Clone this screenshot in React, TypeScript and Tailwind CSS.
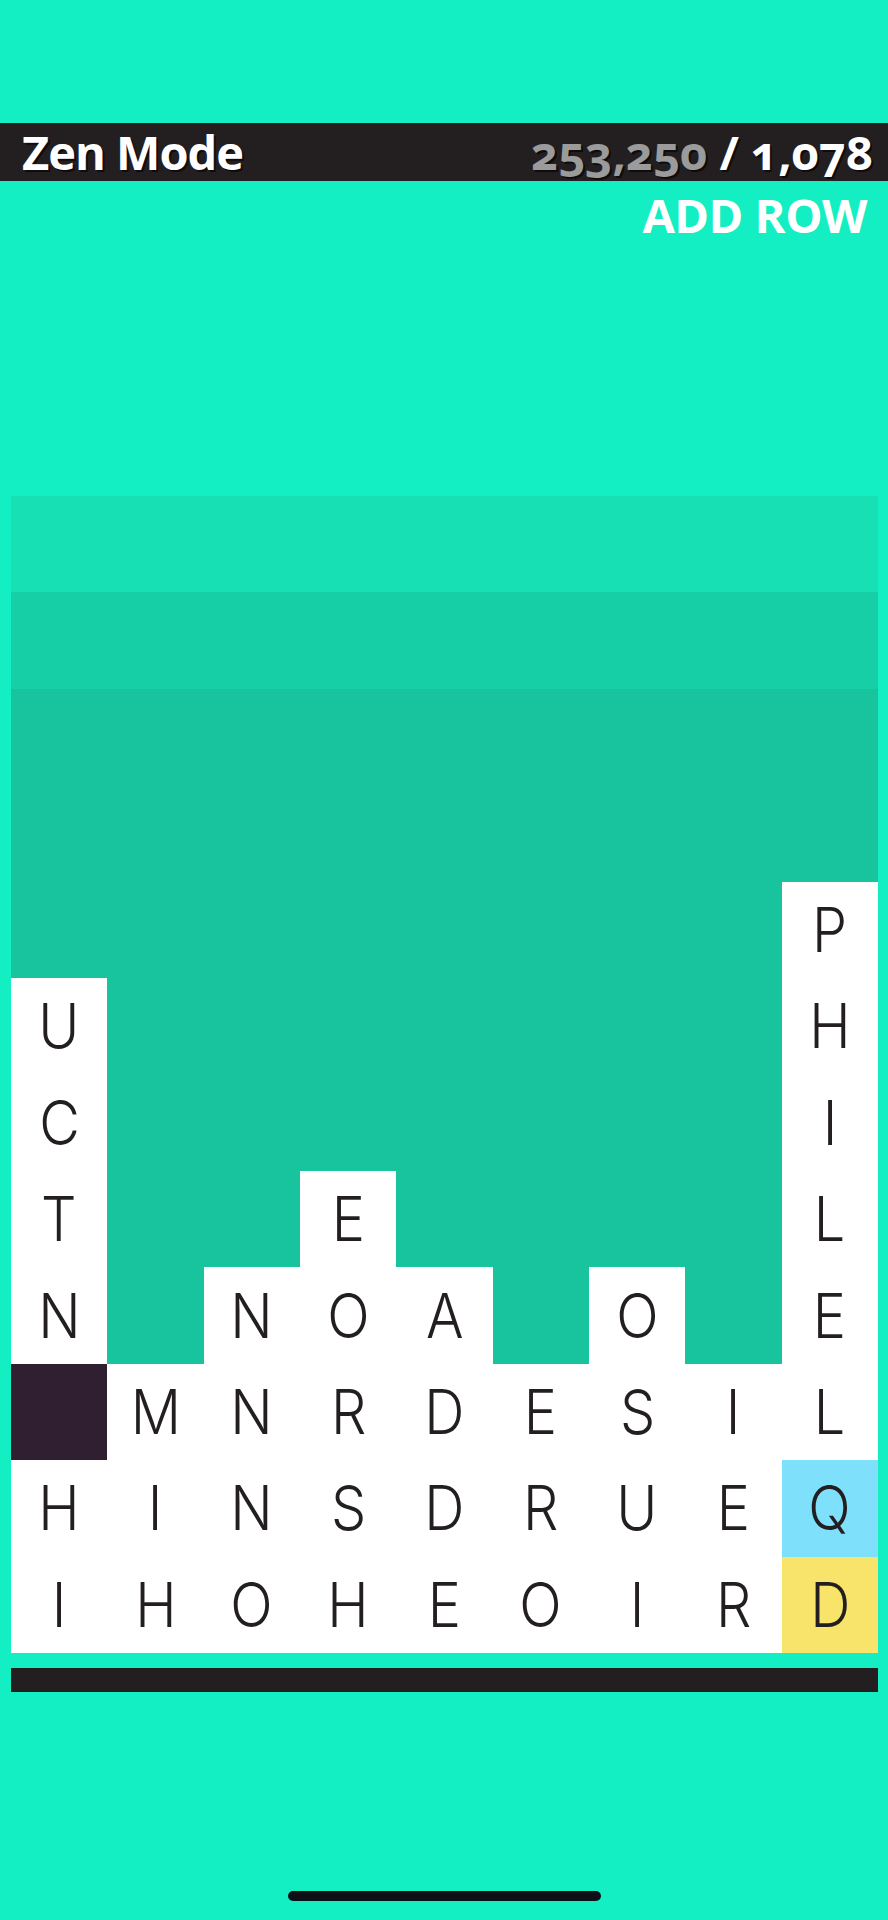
import React from "react";

type Cell = { ch?: string; kind?: "letter" | "dark" | "blue" | "yellow" };

const ROWS = 12;
const COLS = 9;

// letters per column, listed from the top filled row down to the floor
const columns: { top: number; cells: Cell[] }[] = [
  { top: 5, cells: [{ ch: "U" }, { ch: "C" }, { ch: "T" }, { ch: "N" }, { kind: "dark" }, { ch: "H" }, { ch: "I" }] },
  { top: 9, cells: [{ ch: "M" }, { ch: "I" }, { ch: "H" }] },
  { top: 8, cells: [{ ch: "N" }, { ch: "N" }, { ch: "N" }, { ch: "O" }] },
  { top: 7, cells: [{ ch: "E" }, { ch: "O" }, { ch: "R" }, { ch: "S" }, { ch: "H" }] },
  { top: 8, cells: [{ ch: "A" }, { ch: "D" }, { ch: "D" }, { ch: "E" }] },
  { top: 9, cells: [{ ch: "E" }, { ch: "R" }, { ch: "O" }] },
  { top: 8, cells: [{ ch: "O" }, { ch: "S" }, { ch: "U" }, { ch: "I" }] },
  { top: 9, cells: [{ ch: "I" }, { ch: "E" }, { ch: "R" }] },
  {
    top: 4,
    cells: [
      { ch: "P" },
      { ch: "H" },
      { ch: "I" },
      { ch: "L" },
      { ch: "E" },
      { ch: "L" },
      { ch: "Q", kind: "blue" },
      { ch: "D", kind: "yellow" },
    ],
  },
];

function cellAt(row: number, col: number): Cell | null {
  const c = columns[col];
  const i = row - c.top;
  if (i < 0 || i >= c.cells.length) return null;
  return c.cells[i];
}

function emptyClass(row: number) {
  if (row === 0) return "bg-[#17e0b4]";
  if (row === 1) return "bg-[#16cfa7]";
  return "bg-[#18c49e]";
}

function Tile({ cell }: { cell: Cell }) {
  const bg =
    cell.kind === "dark"
      ? "bg-[#2f1f30]"
      : cell.kind === "blue"
        ? "bg-[#7fe0fb]"
        : cell.kind === "yellow"
          ? "bg-[#f8e46a]"
          : "bg-white";
  return (
    <div
      className={`${bg} flex items-center justify-center text-[#231f20] text-[62px] font-light leading-none`}
      style={{ fontFamily: "Inter, 'Noto Sans', sans-serif" }}
    >
      <span className="inline-block scale-x-90">{cell.ch}</span>
    </div>
  );
}

export default function App() {
  const cells = [];
  for (let r = 0; r < ROWS; r++) {
    for (let c = 0; c < COLS; c++) {
      const cell = cellAt(r, c);
      cells.push(
        cell ? <Tile key={`${r}-${c}`} cell={cell} /> : <div key={`${r}-${c}`} className={emptyClass(r)} />
      );
    }
  }

  return (
    <div
      className="min-h-[1920px] w-full bg-[#13efc2] pt-[123px] flex flex-col"
      style={{ fontFamily: "'Open Sans', 'Liberation Sans', sans-serif" }}
    >
      {/* top bar */}
      <div className="h-[58px] bg-[#231f20] flex items-center justify-between pl-[22px] pr-[15px] text-[47px] font-bold leading-[58px] text-white">
        <span className="tracking-[-1px] [text-shadow:2px_2px_0_rgba(0,0,0,0.6)]">Zen Mode</span>
        <span className="oldstyle-nums [text-shadow:2px_2px_0_rgba(0,0,0,0.6)]">
          <span className="text-[#9b9b9b]">253,250</span> / 1,078
        </span>
      </div>

      <div className="mt-[11px] flex justify-end pr-[21px] text-[47px] font-bold leading-[47px] tracking-[-0.5px] text-white">
        ADD ROW
      </div>

      {/* board */}
      <div className="mt-[257px] ml-[11px] w-[867px] h-[1157px] grid grid-cols-9 grid-rows-12">{cells}</div>

      <div className="mt-[15px] ml-[11px] w-[867px] h-[24px] bg-[#231f20]" />

      <div className="mt-[199px] mx-auto w-[313px] h-[10px] rounded-full bg-[#0d1117]" />
    </div>
  );
}
